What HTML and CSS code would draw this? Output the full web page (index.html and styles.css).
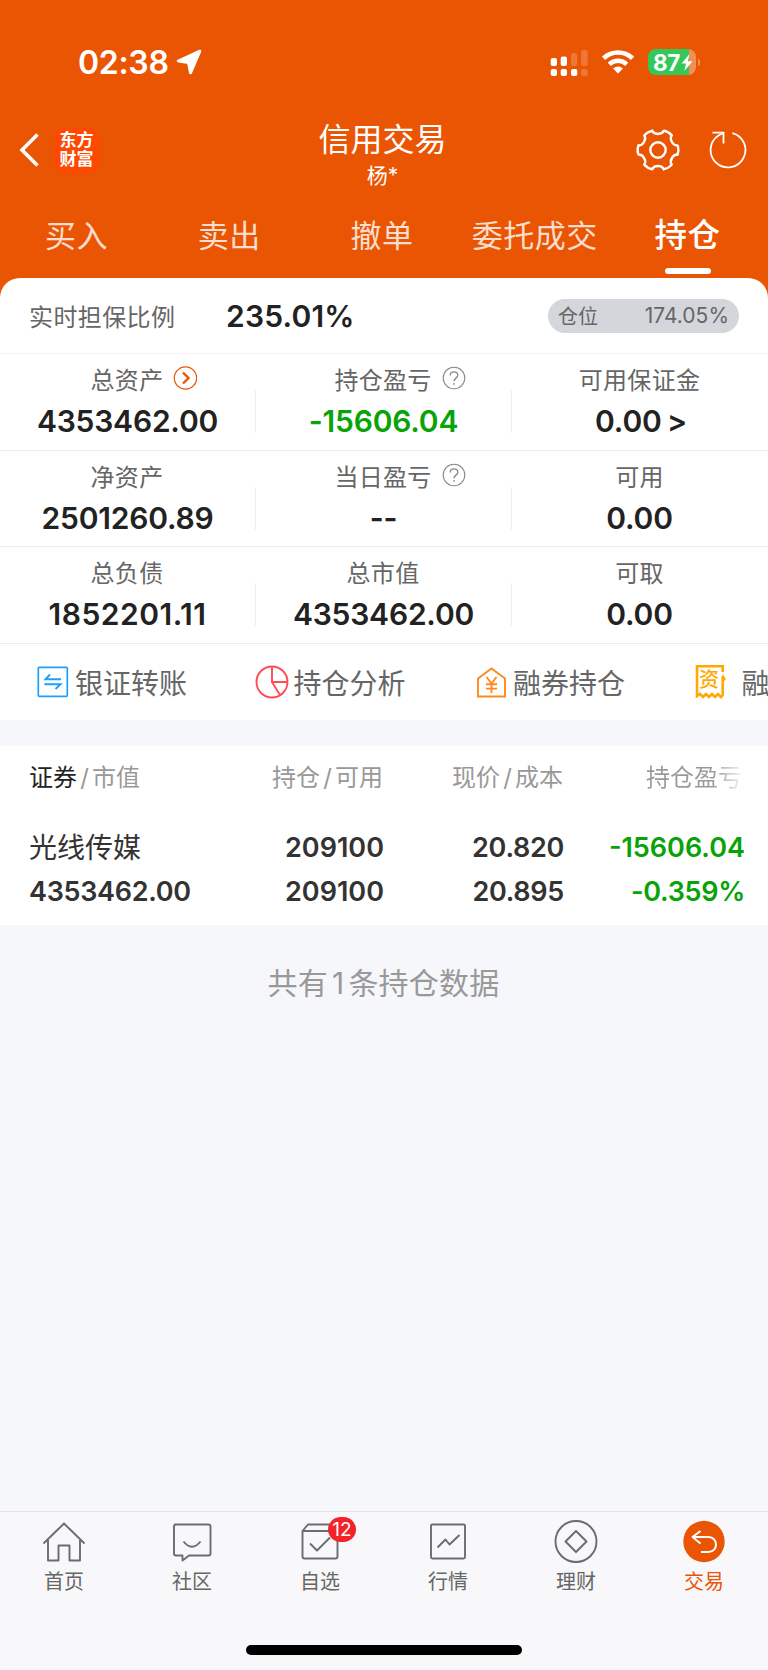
FILE: index.html
```html
<!DOCTYPE html>
<html lang="zh-CN">
<head>
    <meta charset="UTF-8">
    <meta name="viewport" content="width=device-width, initial-scale=1.0">
    <title>信用交易</title>
    <link rel="stylesheet" href="styles.css">
</head>
<body>
    <header class="header">
        <div class="status-bar">
            <span class="time">02:38</span>
            <svg class="location" width="26" height="26" viewBox="0 0 26 26">
                <path d="M23.800 2.200L2.300 12L12.500 13.500L14.500 23.800Z" fill="#fff" stroke="#fff" stroke-width="3" stroke-linejoin="round"/>
            </svg>
            <svg class="signal" width="38" height="27" viewBox="0 0 38 27" fill="#fff">
                <rect x="0.700" y="9" width="6.300" height="8" rx="2"/>
                <rect x="10.700" y="7.500" width="6.300" height="9.500" rx="2"/>
                <rect x="21" y="4" width="6.300" height="13" rx="2" opacity=".2"/>
                <rect x="31" y="1" width="6.700" height="16" rx="2" opacity=".2"/>
                <rect x="0.700" y="20" width="6.300" height="7" rx="2"/>
                <rect x="10.700" y="20" width="6.300" height="7" rx="2"/>
                <rect x="21" y="20" width="6.300" height="7" rx="2"/>
                <rect x="31" y="20" width="6.700" height="7" rx="2" opacity=".2"/>
            </svg>
            <svg class="wifi" width="32" height="24" viewBox="0 0 32 24" fill="none" stroke="#fff">
                <path d="M1.500 8.300A21 21 0 0 1 30.500 8.300" stroke-width="4.600"/>
                <path d="M7.300 14.300A12.600 12.600 0 0 1 24.700 14.300" stroke-width="4.400"/>
                <path d="M16 23.500L11 18.600Q16 14.600 21 18.600Z" fill="#fff" stroke="none"/>
            </svg>
            <div class="battery">
                <span>87</span>
                <svg width="12" height="17" viewBox="0 0 12 17"><path d="M8.500 0L0.500 9.500H5L3.300 17L11.500 7.200H6.900Z" fill="#fff"/></svg>
            </div>
            <div class="battery-tip"></div>
        </div>

        <div class="title-bar">
            <div class="title-left">
                <svg width="20" height="34" viewBox="0 0 20 34" fill="none" stroke="#fff" stroke-width="3.600">
                    <path d="M18.500 1.500L3 17L18.500 32.500"/>
                </svg>
                <div class="logo">东方<br>财富</div>
            </div>
            <div class="title">
                <h1>信用交易</h1>
                <p>杨*</p>
            </div>
            <div class="title-right">
                <svg width="44" height="44" viewBox="-22 -22 44 44" fill="none" stroke="#fff" stroke-width="2.400" stroke-linecap="round" stroke-linejoin="round">
                    <g id="tooth"><path d="M-5.800 -19.200C-3.800 -15 3.800 -15 5.800 -19.200Q10.500 -18.500 13.700 -14.600"/></g>
                    <use href="#tooth" transform="rotate(60)"/>
                    <use href="#tooth" transform="rotate(120)"/>
                    <use href="#tooth" transform="rotate(180)"/>
                    <use href="#tooth" transform="rotate(240)"/>
                    <use href="#tooth" transform="rotate(300)"/>
                    <circle r="7.700"/>
                </svg>
                <svg width="38" height="38" viewBox="-19 -19 38 38" fill="none" stroke="#fff" stroke-width="1.800">
                    <path d="M4.300 -16.900A17.400 17.400 0 1 1 -9.500 -14.600L-4.500 -17.300"/>
                    <path d="M-15.500 -17.300H-4.500V-6.500"/>
                </svg>
            </div>
        </div>

        <nav class="tabs">
            <a class="tab">买入</a>
            <a class="tab">卖出</a>
            <a class="tab">撤单</a>
            <a class="tab">委托成交</a>
            <a class="tab active">持仓</a>
        </nav>
    </header>

    <main>
        <section class="card">
            <div class="ratio">
                <span class="ratio-label">实时担保比例</span>
                <span class="ratio-value">235.01%</span>
                <div class="pill"><span>仓位</span><span class="pill-value">174.05%</span></div>
            </div>
            <div class="stats">
                <div class="stat">
                    <div class="label">总资产
                        <svg class="hint" width="24" height="24" viewBox="0 0 24 24" fill="none" stroke="#ea5504">
                            <circle cx="12.500" cy="12" r="11.200" stroke-width="1.200"/>
                            <path d="M10 6.500L15.500 12L10 17.500" stroke-width="2.400"/>
                        </svg>
                    </div>
                    <div class="value">4353462.00</div>
                </div>
                <div class="stat">
                    <div class="label">持仓盈亏
                        <svg class="hint" width="24" height="24" viewBox="0 0 24 24" fill="none" stroke="#888">
                            <circle cx="12" cy="12" r="10.800" stroke-width="1.100"/>
                            <path d="M8.200 9.500C8.200 4.500 15.800 4.700 15.800 9.300C15.800 12 12 12.300 12 15.300M12 17V18.700" stroke-width="1.300"/>
                        </svg>
                    </div>
                    <div class="value green">-15606.04</div>
                </div>
                <div class="stat">
                    <div class="label">可用保证金</div>
                    <div class="value link">0.00 &gt;</div>
                </div>
            </div>
            <div class="stats">
                <div class="stat">
                    <div class="label">净资产</div>
                    <div class="value">2501260.89</div>
                </div>
                <div class="stat">
                    <div class="label">当日盈亏
                        <svg class="hint" width="24" height="24" viewBox="0 0 24 24" fill="none" stroke="#888">
                            <circle cx="12" cy="12" r="10.800" stroke-width="1.100"/>
                            <path d="M8.200 9.500C8.200 4.500 15.800 4.700 15.800 9.300C15.800 12 12 12.300 12 15.300M12 17V18.700" stroke-width="1.300"/>
                        </svg>
                    </div>
                    <div class="value">--</div>
                </div>
                <div class="stat">
                    <div class="label">可用</div>
                    <div class="value">0.00</div>
                </div>
            </div>
            <div class="stats">
                <div class="stat">
                    <div class="label">总负债</div>
                    <div class="value wide">1852201.11</div>
                </div>
                <div class="stat">
                    <div class="label">总市值</div>
                    <div class="value">4353462.00</div>
                </div>
                <div class="stat">
                    <div class="label">可取</div>
                    <div class="value">0.00</div>
                </div>
            </div>
            <div class="shortcuts">
                <a class="shortcut">
                    <svg width="32" height="32" viewBox="0 0 32 32" fill="none" stroke="#1e9fff">
                        <rect x="1.300" y="1.300" width="29" height="29" rx="1" stroke-width="1.700"/>
                        <path d="M24 13.300H8.500L13 8.500M7.500 18.300H23.500L18.500 23" stroke-width="1.900"/>
                    </svg>
                    <span>银证转账</span>
                </a>
                <a class="shortcut">
                    <svg class="pie" width="34" height="34" viewBox="0 0 34 34" fill="none" stroke="#ff4d55" stroke-width="1.900">
                        <circle cx="17" cy="17" r="15.500"/>
                        <path d="M17 1.500V17H32.500M17 17L25 30"/>
                    </svg>
                    <span>持仓分析</span>
                </a>
                <a class="shortcut">
                    <svg width="31" height="32" viewBox="0 0 31 32" fill="none" stroke="#ff8a1e" stroke-width="1.900">
                        <path d="M2 30.500V12.500L15.500 2.500L29 12.500V30.500Z"/>
                        <path d="M10.500 11L15.500 17.500L20.500 11M15.500 17.500V27M10 18.300H21M10 22.600H21"/>
                    </svg>
                    <span>融券持仓</span>
                </a>
                <a class="shortcut">
                    <div class="receipt">
                        <svg width="31" height="36" viewBox="0 0 31 36" fill="none" stroke="#ffa800" stroke-width="2.600">
                            <path d="M27.700 8V2.300H2V32L5 30L8 33L11 30L14 33L17 30L20 33L23 30L26 33L27.700 31V12"/>
                            <path d="M27.500 10L31 15L27.500 19Z" fill="#ffa800" stroke="none"/>
                        </svg>
                        <span>资</span>
                    </div>
                    <span>融</span>
                </a>
            </div>
        </section>

        <section class="holdings">
            <div class="row head">
                <span><b>证券</b><i>/</i>市值</span>
                <span>持仓<i>/</i>可用</span>
                <span>现价<i>/</i>成本</span>
                <span class="fade">持仓盈亏</span>
            </div>
            <div class="row name-row">
                <span class="name">光线传媒</span>
                <span>209100</span>
                <span class="price">20.820</span>
                <span class="green">-15606.04</span>
            </div>
            <div class="row">
                <span class="market">4353462.00</span>
                <span>209100</span>
                <span class="price">20.895</span>
                <span class="green percent">-0.359%</span>
            </div>
        </section>
        <p class="total">共有<em>1</em>条持仓数据</p>
    </main>

    <footer class="footer">
        <nav class="bottom-nav">
            <a class="nav-item">
                <svg width="44" height="44" viewBox="0 0 44 44">
                    <path d="M1.500 23.500L22 3.500L42.500 23.500M6 20V40.500H16.500V25.500H27.500V40.500H38V20"/>
                </svg>
                <span>首页</span>
            </a>
            <a class="nav-item">
                <svg width="44" height="44" viewBox="0 0 44 44">
                    <path d="M5 4.500H38.500Q40.500 4.500 40.500 6.500V33.500Q40.500 35.500 38.500 35.500H19L12.500 40.500V35.500H6Q4 35.500 4 33.500V6.500Q4 4.500 6 4.500Z"/>
                    <path d="M13.500 21.500Q22 32 30.500 21.500"/>
                </svg>
                <span>社区</span>
            </a>
            <a class="nav-item">
                <svg width="44" height="44" viewBox="0 0 44 44">
                    <path d="M4.500 11L10 4.500H34L39.500 11V36.500Q39.500 38.500 37.500 38.500H6.500Q4.500 38.500 4.500 36.500ZM4.500 11H39.500M12 23.500L19 30.500L32 17.500"/>
                </svg>
                <span>自选</span>
                <em class="badge">12</em>
            </a>
            <a class="nav-item">
                <svg width="44" height="44" viewBox="0 0 44 44">
                    <rect x="5" y="4.500" width="34" height="34" rx="1.500"/>
                    <path d="M11.500 27.500L19.500 19.500L23.500 24.500L33.500 15"/>
                </svg>
                <span>行情</span>
            </a>
            <a class="nav-item">
                <svg width="44" height="44" viewBox="0 0 44 44">
                    <circle cx="22" cy="21.500" r="20.500"/>
                    <path d="M22 11L32.500 21.500L22 32L11.500 21.500Z"/>
                </svg>
                <span>理财</span>
            </a>
            <a class="nav-item active">
                <svg width="44" height="44" viewBox="0 0 44 44">
                    <circle cx="22" cy="21.500" r="20.700" class="disc"/>
                    <path d="M18.500 11L10.500 17L18.500 23.500M11 17H26.500C36.500 17 36.500 32 26.500 32H19"/>
                </svg>
                <span>交易</span>
            </a>
        </nav>
        <div class="home-indicator"></div>
    </footer>
</body>
</html>
```

FILE: styles.css
```css
* {
    box-sizing: border-box;
}
body {
    margin: 0;
    height: 1670px;
    display: flex;
    flex-direction: column;
    background-color: #f6f7fa;
    font-family: Inter, "Noto Sans CJK SC", sans-serif;
    color: #222;
    overflow: hidden;
}
h1, p {
    margin: 0;
    font-weight: normal;
}
svg {
    display: block;
    flex: none;
}
i, em {
    font-style: normal;
}

/* header */
.header {
    height: 298px;
    background-color: #ea5504;
    color: white;
}
.status-bar {
    display: flex;
    align-items: center;
    height: 75px;
    padding: 49px 0 0 78px;
}
.time {
    width: 98px;
    padding-top: 1px;
    font-size: 32px;
    line-height: 26px;
    font-weight: 600;
    letter-spacing: -0.3px;
}
.signal {
    margin-left: 348px;
}
.wifi {
    margin-left: 14px;
}
.battery {
    display: flex;
    align-items: center;
    width: 48px;
    height: 26px;
    margin-left: 14px;
    padding-left: 5px;
    border-radius: 8px;
    background: linear-gradient(to right, #34c759 41.500px, #f28e57 41.500px);
    font-size: 22.500px;
    font-weight: 700;
    line-height: 26px;
}
.battery span {
    width: 28px;
    padding-top: 1px;
    letter-spacing: -0.3px;
}
.battery-tip {
    width: 2px;
    height: 7px;
    margin-left: 2px;
    border-radius: 0 2px 2px 0;
    background-color: #f28e57;
}
.title-bar {
    display: grid;
    grid-template-columns: 1fr auto 1fr;
    align-items: center;
    height: 74px;
    margin-top: 38px;
    padding: 0 21px 0 19px;
}
.title-left {
    display: flex;
    align-items: center;
    gap: 15px;
}
.logo {
    width: 45px;
    height: 45px;
    padding-top: 3px;
    border-radius: 9px;
    background-color: #ff4800;
    font-size: 17px;
    line-height: 19px;
    font-weight: 700;
    text-align: center;
}
.title {
    margin-bottom: -6px;
    padding: 6px 1px 0 0;
    text-align: center;
}
.title h1 {
    font-size: 32px;
    line-height: 40px;
}
.title p {
    font-size: 21px;
    line-height: 32px;
}
.title-right {
    display: flex;
    align-items: center;
    justify-content: flex-end;
    gap: 29px;
}
.tabs {
    display: flex;
    height: 87px;
    padding: 24px 4px 0 0;
}
.tab {
    display: flex;
    flex: 1;
    flex-direction: column;
    align-items: center;
    font-size: 31px;
    line-height: 50px;
    color: #fbddcd;
    letter-spacing: 0.5px;
}
.tab.active {
    font-size: 32.500px;
    font-weight: 500;
    color: white;
}
.tab.active::after {
    content: "";
    width: 46px;
    height: 6px;
    margin-top: 7px;
    border-radius: 3px;
    background-color: white;
}

/* account summary */
.card {
    margin-top: -20px;
    height: 442px;
    border-radius: 20px 20px 0 0;
    background-color: white;
    overflow: hidden;
}
.ratio {
    display: flex;
    align-items: center;
    height: 76px;
    padding: 0 29px;
    border-bottom: 1px solid #f3f3f5;
}
.ratio-label {
    width: 197px;
    font-size: 24px;
    color: #666;
    letter-spacing: 0.4px;
}
.ratio-value {
    padding-top: 1px;
    font-size: 30px;
    font-weight: 600;
    letter-spacing: 0.2px;
}
.pill {
    display: flex;
    justify-content: space-between;
    align-items: center;
    width: 191px;
    height: 34px;
    margin-left: auto;
    padding: 0 10px;
    border-radius: 17px;
    background-color: #d3d7dc;
    color: #666;
    font-size: 20px;
}
.pill-value {
    font-size: 21px;
}
.stats {
    display: flex;
    height: 96.500px;
    border-bottom: 1px solid #ececee;
}
.stat {
    flex: 1;
    padding-top: 6px;
    text-align: center;
    background: linear-gradient(#ededf0, #ededf0) right 36px / 1px 43px no-repeat;
}
.stat:last-child {
    background: none;
}
.label {
    display: flex;
    justify-content: center;
    align-items: center;
    height: 41px;
    padding-right: 2px;
    font-size: 24px;
    line-height: 41px;
    color: #666;
    letter-spacing: 0.3px;
}
.stat:last-child .label {
    padding-right: 1px;
}
.hint {
    margin: -5px -34px 0 10px;
}
.value {
    padding-right: 1px;
    font-size: 30px;
    line-height: 41px;
    font-weight: 600;
    letter-spacing: -0.2px;
}
.value.wide {
    letter-spacing: 0.5px;
}
.value.link {
    padding-left: 3px;
    word-spacing: -2px;
}
.green {
    color: #07a307;
}
.shortcuts {
    display: flex;
    height: 77px;
    padding-left: 37px;
}
.shortcut {
    display: flex;
    flex: none;
    align-items: center;
    width: 219.500px;
    gap: 6px;
    font-size: 28px;
    color: #666;
}
.pie {
    margin: 0 -1px 0 -2px;
}
.receipt {
    display: grid;
    place-items: center;
    margin: 0 10px 0 -1px;
}
.receipt > * {
    grid-area: 1 / 1;
}
.receipt span {
    margin: -5px 2px 0 0;
    font-size: 20px;
    font-weight: 500;
    line-height: 20px;
    color: #ffa800;
}

/* holdings table */
.holdings {
    height: 179px;
    margin-top: 26px;
    padding: 9px 23px 0 29px;
    background-color: white;
}
.row {
    display: grid;
    grid-template-columns: 160px 195px 180px 181px;
    font-size: 27px;
    line-height: 44px;
    font-weight: 600;
    color: #333;
    text-align: right;
}
.row > :first-child {
    text-align: left;
}
.row .green {
    color: #07a307;
}
.row .market,
.row .price,
.row .percent {
    letter-spacing: -0.3px;
}
.head {
    padding-top: 1px;
    font-size: 24px;
    font-weight: 400;
    color: #999;
}
.head span {
    padding-right: 1px;
}
.head b {
    font-weight: 400;
    color: #222;
}
.head i {
    padding: 0 3.200px;
}
.name-row {
    margin-top: 26px;
}
.name {
    font-size: 28px;
    font-weight: 400;
}
.head .fade {
    padding-right: 3px;
    background: linear-gradient(to right, #999 148px, #fff 182px);
    -webkit-background-clip: text;
    background-clip: text;
    color: transparent;
}
.total {
    margin-top: 38px;
    padding-right: 1px;
    font-size: 30px;
    line-height: 40px;
    color: #999;
    text-align: center;
    letter-spacing: 0.2px;
}
.total em {
    padding: 0 4px;
}

/* bottom navigation */
.footer {
    height: 159px;
    margin-top: auto;
    border-top: 1px solid #e1e2e4;
    background-color: #f8f8fb;
}
.bottom-nav {
    display: flex;
    height: 133px;
    padding-top: 8px;
}
.nav-item {
    display: flex;
    flex: 1;
    flex-direction: column;
    align-items: center;
    position: relative;
    font-size: 20px;
    line-height: 37px;
    color: #666;
}
.nav-item svg {
    fill: none;
    stroke: #6c6c6e;
    stroke-width: 1.900;
    stroke-linejoin: round;
}
.nav-item.active {
    color: #ea5504;
}
.nav-item.active svg {
    stroke: white;
    stroke-width: 2;
}
.nav-item .disc {
    fill: #ea5504;
    stroke: none;
}
.badge {
    position: absolute;
    top: -3px;
    left: 72px;
    width: 28px;
    height: 25px;
    border-radius: 13px;
    background-color: #f6222a;
    color: white;
    font-size: 19px;
    line-height: 25px;
    text-align: center;
}
.home-indicator {
    width: 276px;
    height: 10px;
    margin: 0 auto;
    border-radius: 5px;
    background-color: black;
}
```
